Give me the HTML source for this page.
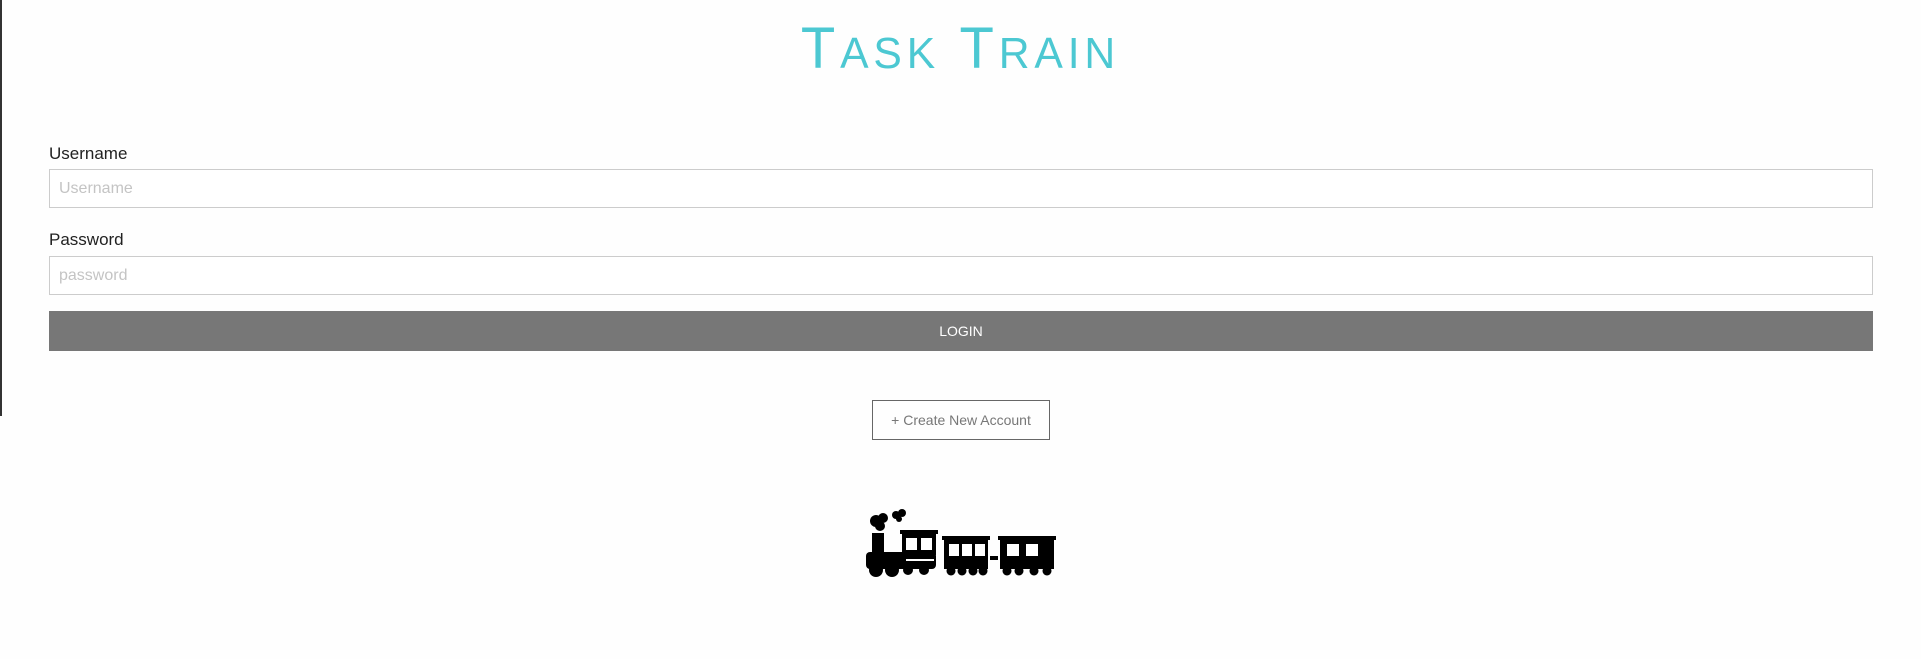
<!DOCTYPE html>
<html><head><meta charset="utf-8"><style>
html,body{margin:0;padding:0;background:#fefefe;width:1921px;height:659px;overflow:hidden;font-family:"Liberation Sans",sans-serif;position:relative}
.edge{position:absolute;left:0;top:0;width:2px;height:416px;background:#333}
.title{position:absolute;left:0;width:1921px;top:17px;text-align:center;color:#4cc8d2;font-size:58px;letter-spacing:5px;font-weight:normal;line-height:64px;transform:scaleX(0.97)}
.title small{font-size:44px}
.lbl{position:absolute;left:49px;font-size:17px;color:#222}
.inp{position:absolute;left:49px;width:1822px;height:37px;border:1px solid #ccc;background:#fff;box-sizing:content-box}
.inp span{position:absolute;left:9px;top:10px;font-size:16px;color:#c4c4c4}
.btn{position:absolute;left:49px;top:311px;width:1824px;height:40px;background:#777;color:#fff;font-size:14px;text-align:center;line-height:40px}
.acc{position:absolute;left:872px;top:400px;width:176px;height:38px;border:1px solid #666;color:#777;font-size:14px;text-align:center;line-height:38px}
</style></head><body>
<div class="edge"></div>
<div class="title">T<small>ASK</small> T<small>RAIN</small></div>
<div class="lbl" style="top:144px">Username</div>
<div class="inp" style="top:169px"><span>Username</span></div>
<div class="lbl" style="top:230px">Password</div>
<div class="inp" style="top:256px"><span>password</span></div>
<div class="btn">LOGIN</div>
<div class="acc">+ Create New Account</div>
<svg style="position:absolute;left:864px;top:500px" width="194" height="80" viewBox="0 0 194 80">
<g fill="#000">
<circle cx="12" cy="21" r="6"/><circle cx="19" cy="18" r="5"/><circle cx="16" cy="26" r="5"/>
<circle cx="32" cy="15" r="4"/><circle cx="38" cy="13" r="4"/><circle cx="35" cy="19" r="3"/>
<rect x="8" y="33" width="12" height="20"/>
<rect x="2" y="52" width="70" height="17" rx="4"/>
<rect x="36" y="30" width="38" height="4"/>
<rect x="38" y="33" width="34" height="22"/>
<rect x="78" y="36" width="48" height="4"/>
<rect x="80" y="39" width="44" height="30"/>
<rect x="126" y="56" width="8" height="4"/>
<rect x="134" y="36" width="58" height="4"/>
<rect x="136" y="39" width="54" height="30"/>
<circle cx="12" cy="70" r="7"/><circle cx="28" cy="70" r="7"/><circle cx="44" cy="70" r="5"/><circle cx="60" cy="70" r="5"/>
<circle cx="87" cy="71" r="4.5"/><circle cx="98" cy="71" r="4.5"/><circle cx="109" cy="71" r="4.5"/><circle cx="119" cy="71" r="4.5"/>
<circle cx="143" cy="71" r="4.5"/><circle cx="155" cy="71" r="4.5"/><circle cx="170" cy="71" r="4.5"/><circle cx="183" cy="71" r="4.5"/>
</g>
<g fill="#fff">
<rect x="42" y="38" width="11" height="12"/><rect x="57" y="38" width="11" height="12"/>
<rect x="85" y="44" width="10" height="12"/><rect x="98" y="44" width="10" height="12"/><rect x="111" y="44" width="10" height="12"/>
<rect x="143" y="44" width="12" height="12"/><rect x="162" y="44" width="12" height="12"/>
<rect x="42" y="59" width="28" height="2"/>
</g>
</svg>
</body></html>
